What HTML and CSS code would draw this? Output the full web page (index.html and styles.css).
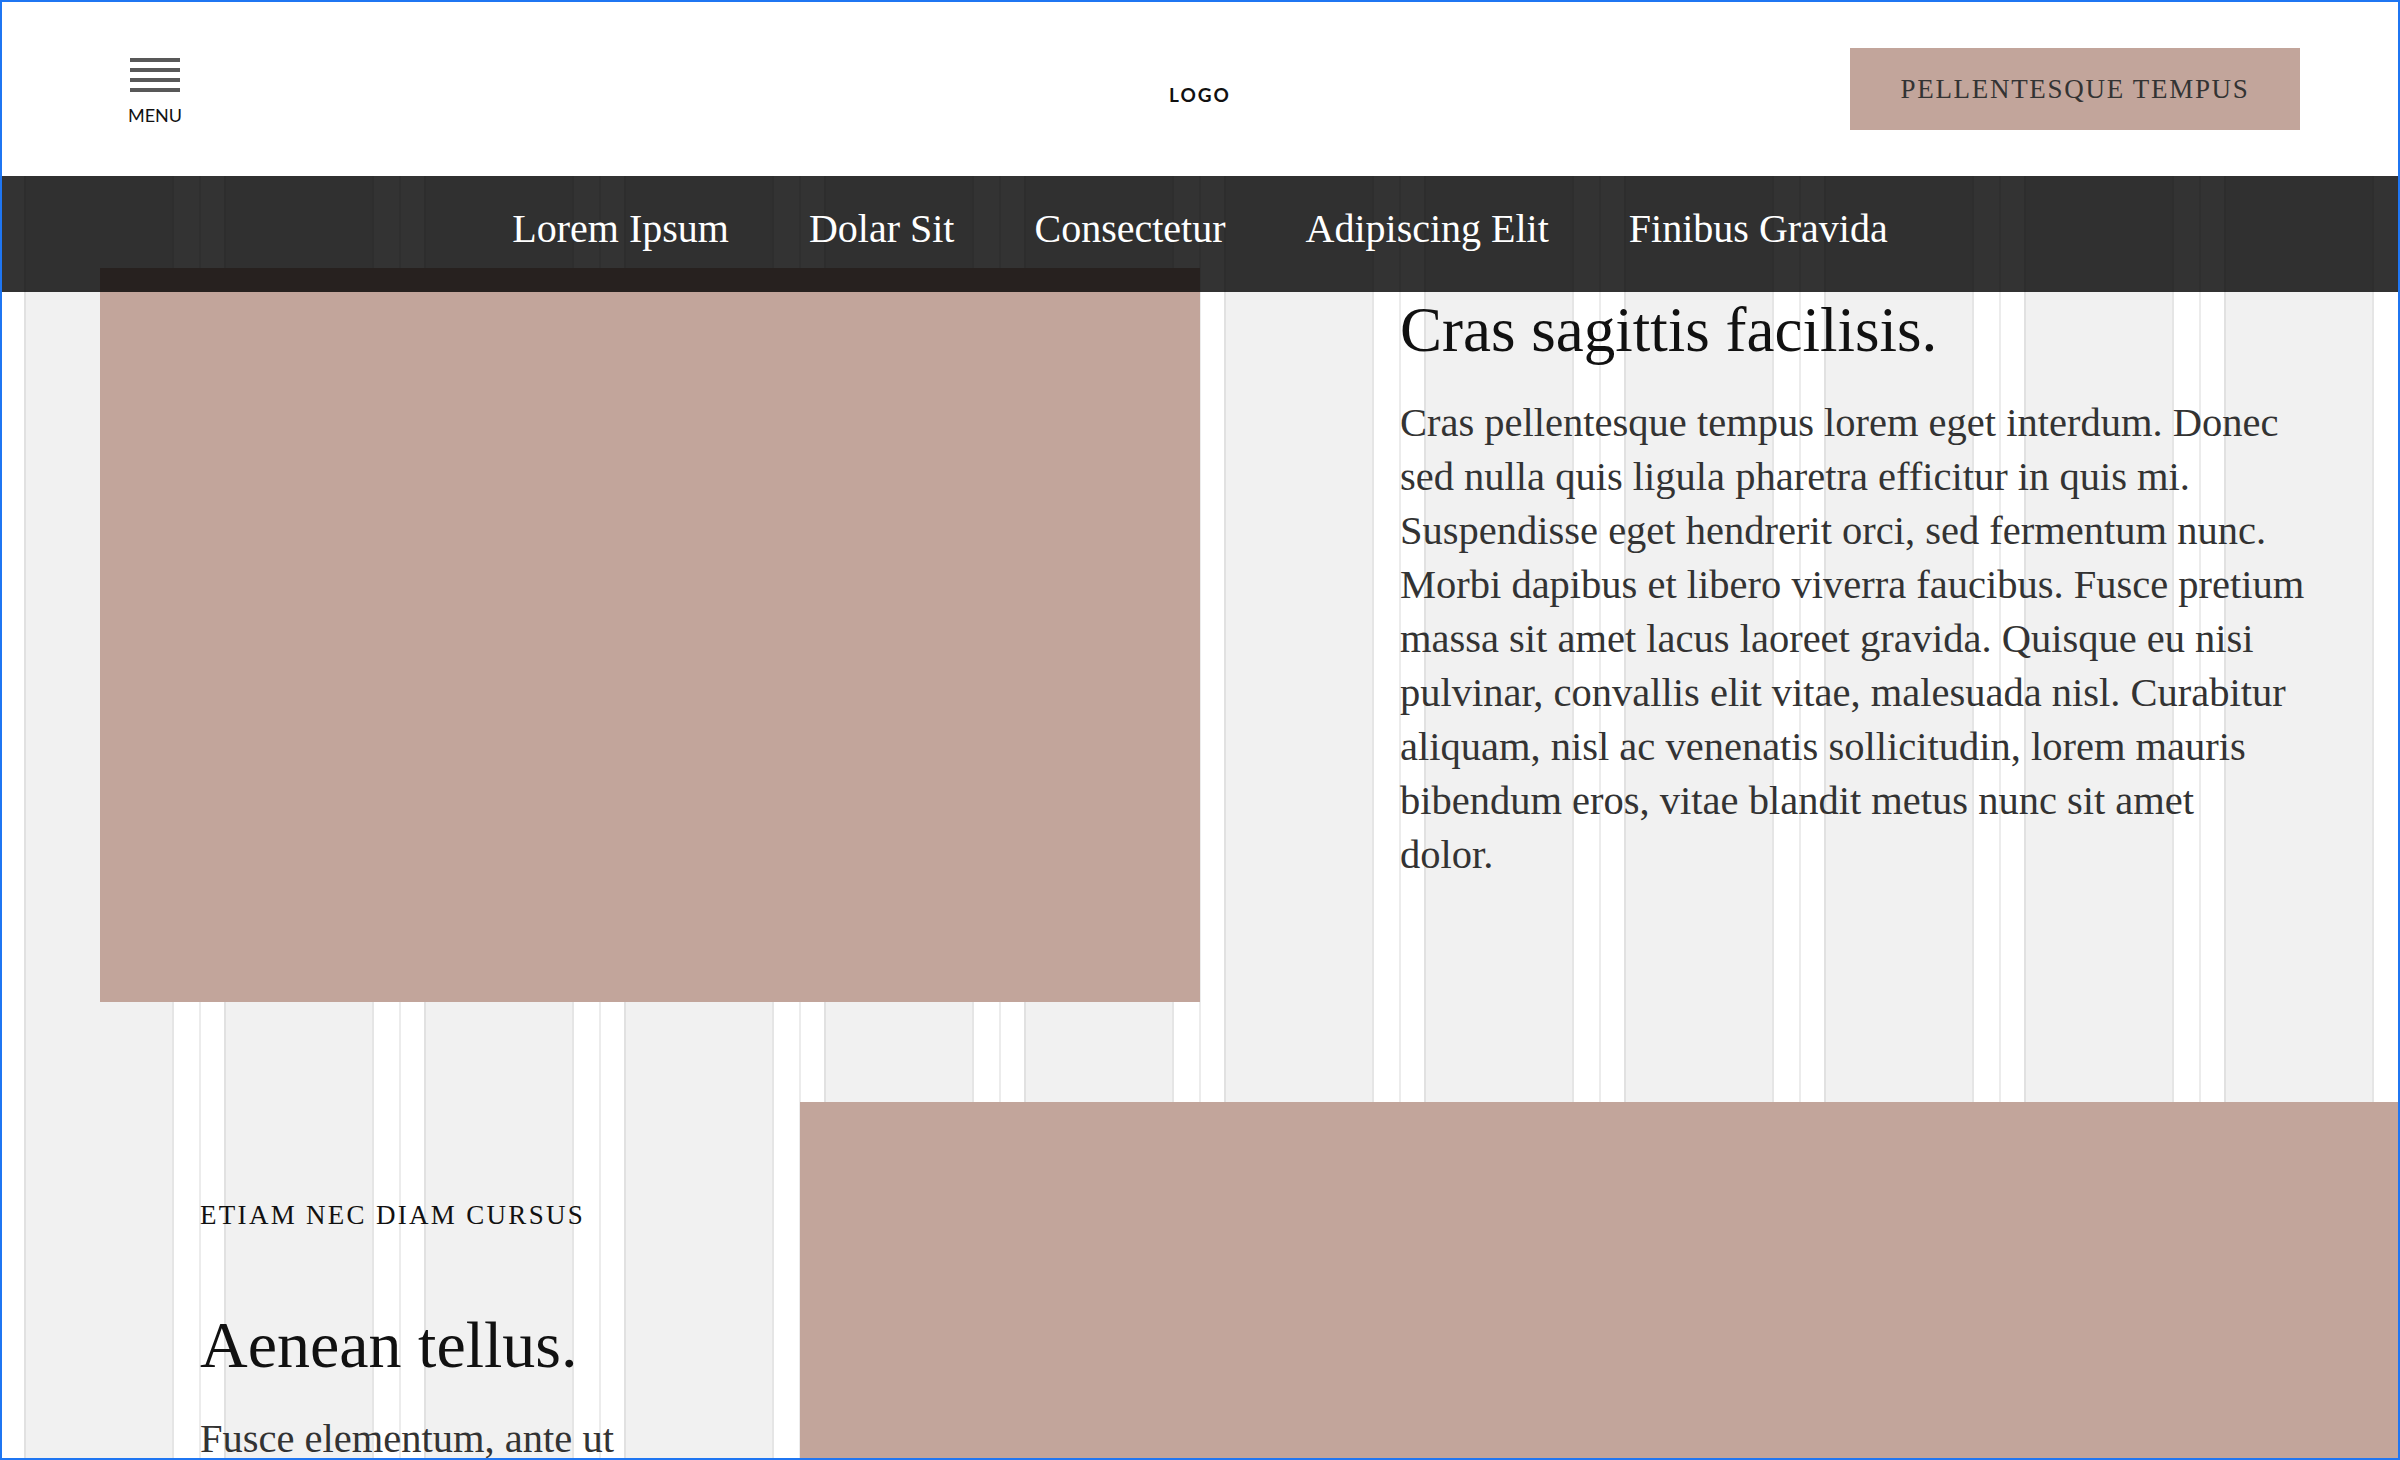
FILE: index.html
```html
<!DOCTYPE html>
<html lang="en">
<head>
<meta charset="utf-8">
<title>Layout</title>
<link rel="stylesheet" href="styles.css">
</head>
<body>
<div class="frame">
  <header class="topbar">
    <a class="menu" href="#">
      <svg class="menu-icon" width="50" height="34" viewBox="0 0 50 34" aria-hidden="true">
        <rect x="0" y="0" width="50" height="4"/>
        <rect x="0" y="10" width="50" height="4"/>
        <rect x="0" y="20" width="50" height="4"/>
        <rect x="0" y="30" width="50" height="4"/>
      </svg>
      <span class="menu-label">MENU</span>
    </a>
    <div class="logo">LOGO</div>
    <a class="cta" href="#">PELLENTESQUE TEMPUS</a>
  </header>

  <div class="stage">
    <nav class="mainnav">
      <a href="#">Lorem Ipsum</a>
      <a href="#">Dolar Sit</a>
      <a href="#">Consectetur</a>
      <a href="#">Adipiscing Elit</a>
      <a href="#">Finibus Gravida</a>
    </nav>

    <main class="content">
      <section class="intro">
        <div class="media media-a"></div>
        <div class="intro-text">
          <h1 class="title title-lg">Cras sagittis facilisis.</h1>
          <p class="body-text">Cras pellentesque tempus lorem eget interdum. Donec<br>
          sed nulla quis ligula pharetra efficitur in quis mi.<br>
          Suspendisse eget hendrerit orci, sed fermentum nunc.<br>
          Morbi dapibus et libero viverra faucibus. Fusce pretium<br>
          massa sit amet lacus laoreet gravida. Quisque eu nisi<br>
          pulvinar, convallis elit vitae, malesuada nisl. Curabitur<br>
          aliquam, nisl ac venenatis sollicitudin, lorem mauris<br>
          bibendum eros, vitae blandit metus nunc sit amet<br>
          dolor.</p>
        </div>
      </section>

      <section class="feature">
        <div class="feature-text">
          <p class="eyebrow">ETIAM NEC DIAM CURSUS</p>
          <h2 class="title title-md">Aenean tellus.</h2>
          <p class="body-text">Fusce elementum, ante ut vestibulum ornare, lectus nibh tincidunt magna.</p>
        </div>
        <div class="media media-b"></div>
      </section>
    </main>
  </div>
</div>
</body>
</html>
```

FILE: styles.css
```css
html, body {
  margin: 0;
  padding: 0;
  background: #ffffff;
}

.frame {
  height: 100vh;
  box-sizing: border-box;
  border: 2px solid #1f76f2;
  overflow: hidden;
  display: flex;
  flex-direction: column;
}

/* ---------- top bar ---------- */
.topbar {
  flex: 0 0 auto;
  height: 174px;
  box-sizing: border-box;
  padding: 0 98px;
  display: grid;
  grid-template-columns: 1fr auto 1fr;
  align-items: start;
  background: #ffffff;
}

.menu {
  justify-self: start;
  margin-top: 56px;
  margin-left: 28px;
  display: flex;
  flex-direction: column;
  align-items: center;
  gap: 14px;
  text-decoration: none;
  color: #111;
}

.menu-icon {
  display: block;
  fill: #585858;
}

.menu-label {
  font-family: Lato, "Open Sans", sans-serif;
  font-size: 18px;
  line-height: 18px;
  color: #111;
}

.logo {
  justify-self: center;
  margin-top: 83px;
  font-family: Lato, "Open Sans", sans-serif;
  font-weight: 700;
  font-size: 19px;
  line-height: 19px;
  letter-spacing: 2px;
  color: #111;
}

.cta {
  justify-self: end;
  margin-top: 46px;
  width: 450px;
  height: 82px;
  display: flex;
  align-items: center;
  justify-content: center;
  background: #c2a59b;
  color: #333;
  text-decoration: none;
  font-family: "Liberation Serif", "Times New Roman", serif;
  font-size: 27px;
  letter-spacing: 1.7px;
}

/* ---------- stage with grid overlay ---------- */
.stage {
  flex: 1 1 auto;
  display: grid;
  background-color: #ffffff;
  background-image: linear-gradient(to right,
    #ececec 0, #ececec 1px,
    #ffffff 1px, #ffffff 24px,
    #e1e1e1 24px, #e1e1e1 26px,
    #f1f1f1 26px, #f1f1f1 172px,
    #e5e5e5 172px, #e5e5e5 174px,
    #ffffff 174px, #ffffff 199px,
    #ececec 199px, #ececec 200px);
  background-size: 200px 100%;
  background-position: -2px 0;
  background-repeat: repeat-x;
}

.stage > .mainnav,
.stage > .content {
  grid-area: 1 / 1;
}

.mainnav {
  z-index: 1;
  align-self: start;
  height: 116px;
  box-sizing: border-box;
  padding-top: 26px;
  display: flex;
  justify-content: center;
  gap: 80px;
  background: rgba(0, 0, 0, 0.8);
}

.mainnav a {
  font-family: "Liberation Serif", "Times New Roman", serif;
  font-size: 40px;
  line-height: 54px;
  color: #ffffff;
  text-decoration: none;
}

/* ---------- content ---------- */
.content {
  display: flex;
  flex-direction: column;
}

.media {
  background: #c2a59b;
}

.intro {
  display: flex;
  align-items: flex-start;
  gap: 200px;
  padding: 92px 0 0 98px;
}

.media-a {
  flex: 0 0 1100px;
  height: 734px;
}

.intro-text {
  width: 930px;
  padding-top: 25px;
}

.title {
  margin: 0 0 29px 0;
  font-family: "Liberation Serif", "Times New Roman", serif;
  font-weight: 400;
  line-height: 74px;
  color: #111;
}

.title-lg {
  font-size: 63px;
}

.title-md {
  font-size: 66px;
  margin-bottom: 30px;
}

.body-text {
  margin: 0;
  font-family: "Liberation Serif", "Times New Roman", serif;
  font-size: 40.5px;
  line-height: 54px;
  color: #333;
}

.feature {
  display: flex;
  align-items: flex-start;
  margin-top: 100px;
}

.feature-text {
  flex: 0 0 600px;
  box-sizing: border-box;
  margin-left: 198px;
  padding: 97px 60px 0 0;
}

.eyebrow {
  margin: 0 0 77px 0;
  font-family: "Liberation Serif", "Times New Roman", serif;
  font-size: 27px;
  line-height: 32px;
  letter-spacing: 2.3px;
  color: #111;
}

.media-b {
  flex: 1 1 auto;
  height: 1066px;
}
```
